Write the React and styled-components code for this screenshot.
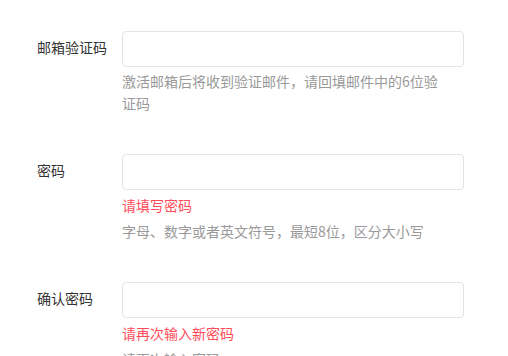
import React from "react";
import styled, { createGlobalStyle } from "styled-components";

const GlobalStyle = createGlobalStyle`
  html, body {
    margin: 0;
    padding: 0;
    background: #fff;
    overflow: hidden;
  }
  body {
    font-family: "Noto Sans CJK SC", "Noto Sans", sans-serif;
    font-size: 14px;
    color: #333;
  }
`;

const Form = styled.form`
  padding: 31px 0 0 37px;
  width: 427px;
`;

const Row = styled.div`
  display: grid;
  grid-template-columns: 85px 342px;
  margin-bottom: 40px;
`;

const Label = styled.label`
  line-height: 32px;
  font-size: 14px;
  color: #333;
`;

const Field = styled.div`
  display: flex;
  flex-direction: column;
`;

const Input = styled.input`
  box-sizing: border-box;
  width: 342px;
  height: 36px;
  border: 1px solid #e4e4e4;
  border-radius: 4px;
  padding: 0 10px;
  font-size: 14px;
  font-family: inherit;
  outline: none;
  background: #fff;
`;

const ErrorText = styled.div`
  font-size: 14px;
  line-height: 24px;
  color: #ff4d5a;
  margin: 3px 0 0;
`;

const HelpText = styled.div`
  font-size: 14px;
  line-height: 22px;
  color: #999;
  margin-top: 3px;
  max-width: 325px;
`;

const fields = [
  {
    label: "邮箱验证码",
    type: "text",
    help: "激活邮箱后将收到验证邮件，请回填邮件中的6位验证码",
  },
  {
    label: "密码",
    type: "password",
    error: "请填写密码",
    help: "字母、数字或者英文符号，最短8位，区分大小写",
  },
  {
    label: "确认密码",
    type: "password",
    error: "请再次输入新密码",
    help: "请再次输入密码",
  },
];

export default function App() {
  return (
    <>
      <GlobalStyle />
      <Form onSubmit={(e) => e.preventDefault()}>
        {fields.map((f) => (
          <Row key={f.label}>
            <Label>{f.label}</Label>
            <Field>
              <Input type={f.type} />
              {f.error && <ErrorText>{f.error}</ErrorText>}
              <HelpText>{f.help}</HelpText>
            </Field>
          </Row>
        ))}
      </Form>
    </>
  );
}
